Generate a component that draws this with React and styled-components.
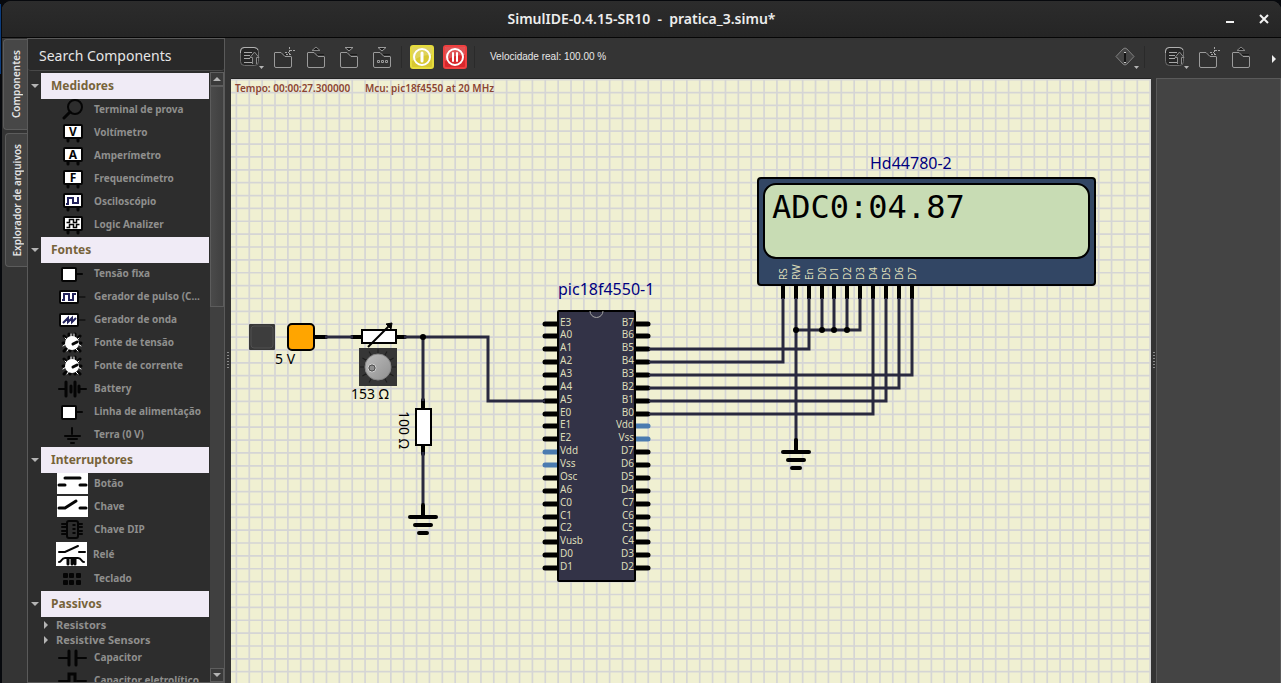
import React from "react";
import styled, { createGlobalStyle } from "styled-components";

const GlobalStyle = createGlobalStyle`
  * { box-sizing: border-box; }
  html, body, #root { height: 100%; }
  body {
    margin: 0;
    overflow: hidden;
    background: #07090d;
    font-family: "Noto Sans", "Open Sans", sans-serif;
  }
  button {
    margin: 0;
    padding: 0;
    border: 0;
    background: none;
    color: inherit;
    font: inherit;
    cursor: pointer;
  }
  ul { list-style: none; margin: 0; padding: 0; }
`;

/* ---------- window frame ---------- */

const Desktop = styled.div`
  height: 100vh;
  padding: 1px 0 0 2px;
  background: linear-gradient(#0c3c7c, #0c3c7c) 0 4px / 1px 70px no-repeat, #07090d;
`;

const Window = styled.div`
  height: 100%;
  display: flex;
  flex-direction: column;
  border-radius: 9px 9px 0 0;
  overflow: hidden;
  background: #343434;
`;

const TitleBar = styled.header`
  flex: 0 0 37px;
  display: grid;
  grid-template-columns: 80px 1fr 80px;
  align-items: center;
  border-bottom: 1px solid #060606;
  background: linear-gradient(#2c2c2c, #252525);
`;

const Title = styled.h1`
  grid-column: 2;
  margin: 0;
  text-align: center;
  white-space: pre;
  font-size: 14px;
  line-height: 20px;
  font-weight: 600;
  color: #ededed;
`;

const WindowButtons = styled.div`
  display: flex;
  justify-content: flex-end;
  padding-right: 8px;
`;

const WindowButton = styled.button`
  width: 18px;
  height: 18px;
  margin-left: 16px;
  color: #f2f2f2;
  svg { display: block; }
`;

const Body = styled.div`
  flex: 1;
  min-height: 0;
  display: flex;
`;

/* ---------- left dock ---------- */

const TabBar = styled.nav`
  flex: 0 0 25px;
  display: flex;
  flex-direction: column;
  align-items: flex-end;
  gap: 3px;
  padding-top: 1px;
`;

const Tab = styled.button`
  width: ${(p) => (p.$active ? 24 : 22)}px;
  height: ${(p) => (p.$active ? 91 : 134)}px;
  border: 1px solid #5c5c5c;
  border-right: 0;
  border-radius: 4px 0 0 4px;
  background: ${(p) => (p.$active ? "#474747" : "#424242")};
  color: #e4e4e4;
  display: flex;
  align-items: center;
  justify-content: center;
`;

const TabText = styled.span`
  writing-mode: vertical-rl;
  transform: rotate(180deg);
  font-size: 10px;
  line-height: 16px;
  font-weight: 600;
  white-space: nowrap;
`;

const Dock = styled.aside`
  flex: 0 0 198px;
  min-width: 0;
  display: flex;
  flex-direction: column;
  border: 1px solid #5a5a5a;
  background: #2d2d2d;
`;

const Search = styled.input`
  flex: 0 0 32px;
  width: 100%;
  padding: 2px 11px 0;
  border: 0;
  border-bottom: 1px solid #484848;
  border-radius: 3px;
  background: #292929;
  color: #e6e6e6;
  font: 14px/20px "Noto Sans", "Open Sans", sans-serif;
  outline: 0;
  &::placeholder { color: #e6e6e6; opacity: 1; }
`;

const TreeArea = styled.div`
  flex: 1;
  min-height: 0;
  display: flex;
  padding-top: 1px;
`;

const Tree = styled.div`
  flex: 1;
  min-width: 0;
  padding-top: 1px;
  overflow: hidden;
`;

const GroupHeader = styled.button`
  width: 100%;
  height: 26px;
  display: flex;
  align-items: center;
  text-align: left;
`;

const Arrow = styled.span`
  flex: 0 0 13px;
  display: flex;
  justify-content: center;
`;

const GroupTitle = styled.span`
  flex: 1;
  height: 26px;
  padding-left: 10px;
  background: #f0ebf6;
  color: #77633a;
  font-size: 12px;
  line-height: 26px;
  font-weight: 700;
`;

const Item = styled.button`
  width: 100%;
  height: ${(p) => (p.$tall ? 26 : 23)}px;
  padding-left: ${(p) => (p.$tall ? 28 : 29)}px;
  padding-bottom: 2px;
  display: flex;
  align-items: center;
  gap: 6px;
  text-align: left;
  svg { flex: none; display: block; }
`;

const ItemText = styled.span`
  font-size: ${(p) => (p.$branch ? 11 : 10)}px;
  line-height: 15px;
  font-weight: 700;
  color: #8f8f8d;
  white-space: nowrap;
`;

const Branch = styled.button`
  width: 100%;
  height: 15px;
  padding-left: 14px;
  display: flex;
  align-items: center;
  gap: 6px;
  text-align: left;
`;

const ScrollBar = styled.div`
  flex: 0 0 14px;
  margin-left: 1px;
  display: flex;
  flex-direction: column;
  background: #404040;
`;

const ScrollButton = styled.button`
  flex: 0 0 14px;
  display: flex;
  align-items: center;
  justify-content: center;
  border: 1px solid #5e5e5e;
  background: #3a3a3a;
`;

const ScrollTrack = styled.div`
  flex: 1;
`;

const ScrollThumb = styled.div`
  height: 38%;
  border: 1px solid #5c5c5c;
  background: linear-gradient(90deg, #4a4a4a, #404040);
`;

const Splitter = styled.div`
  flex: 0 0 ${(p) => p.$width}px;
  display: flex;
  align-items: center;
  justify-content: center;
`;

const Grip = styled.span`
  width: 2px;
  height: 17px;
  background: repeating-linear-gradient(#8a8a8a 0 1px, #343434 1px 3px);
`;

/* ---------- centre and right ---------- */

const Main = styled.main`
  flex: 1;
  min-width: 0;
  display: flex;
  flex-direction: column;
`;

const ToolBar = styled.div`
  flex: 0 0 40px;
  display: flex;
  align-items: center;
  padding: 0 3px 2px 2px;
`;

const ToolButton = styled.button`
  width: 33px;
  height: 33px;
  flex: none;
  display: flex;
  align-items: center;
  justify-content: center;
  svg { display: block; }
`;

const Divider = styled.span`
  flex: 0 0 7px;
  height: 22px;
  background: linear-gradient(#2a2a2a, #2a2a2a) center / 1px 100% no-repeat;
`;

const Speed = styled.span`
  padding-left: 12px;
  font: 10px/16px "Liberation Sans", Arial, sans-serif;
  color: #e8e8e8;
`;

const Spacer = styled.span`
  flex: 1;
`;

const Sheet = styled.svg`
  flex: 1;
  min-height: 0;
  width: 100%;
  display: block;
  background: #f0f0d2;
  font-family: "Noto Sans", "Open Sans", sans-serif;
`;

const Right = styled.aside`
  flex: 0 0 125px;
  display: flex;
  flex-direction: column;
`;

const RightPane = styled.div`
  flex: 1;
  border: 1px solid #5a5a5a;
  border-bottom: 0;
  background: #444444;
`;

/* ---------- schematic text ---------- */

const PinText = styled.text`
  font-size: 10px;
  fill: #dcdcb9;
`;
const NameText = styled.text`
  font-size: 16px;
  fill: #000080;
`;
const ValueText = styled.text`
  font-size: 14px;
  fill: #000;
`;
const StatusText = styled.text`
  font-size: 10px;
  font-weight: 600;
  fill: #8b4433;
`;
const LcdText = styled.text`
  font: 32px "DejaVu Sans Mono", monospace;
  fill: #000;
`;

/* ---------- small drawings ---------- */

const Triangle = ({ dir = "down", color = "#b4b4b4" }) => {
  const d = { down: "M0 2H8L4 6Z", up: "M0 6H8L4 2Z", right: "M2 0L6 4L2 8Z" }[dir];
  return (
    <svg width="8" height="8" viewBox="0 0 8 8">
      <path d={d} fill={color} />
    </svg>
  );
};

const Icon = ({ children, h = 21 }) => (
  <svg width="31" height={h} viewBox={`0 0 31 ${h}`} fill="none" stroke="#050505" strokeLinecap="round">
    {children}
  </svg>
);

const Meter = ({ children }) => (
  <Icon>
    <path d="M11 17V19M21 17V19" strokeWidth="3" />
    <rect x="7" y="3" width="18" height="13" rx="1" fill="#fff" strokeWidth="2" />
    {children}
  </Icon>
);
const Letter = styled.text`
  font: 700 12px "Noto Sans", sans-serif;
  fill: #050505;
  stroke: none;
  text-anchor: middle;
`;

const Dial = () => (
  <Icon>
    <g strokeWidth="3">
      <path d="M12 2V4M18 2V4M7 4L9 6M23 4L21 6M6 11H8M24 11H22M7 19L9 17M23 19L21 17M13 19V18M18 19V18" />
    </g>
    <path d="M8 6L10 8M22 6L20 8M6 14L9 12M10 19L12 16M21 19L18 16M14 2V6M17 2V6M24 14L21 12" stroke="#fff" strokeWidth="1" />
    <circle cx="15" cy="11" r="7" fill="#fff" stroke="none" />
    <path d="M16 12L20 10" strokeWidth="3" />
  </Icon>
);

const Supply = () => (
  <Icon>
    <path d="M20 11H25" strokeWidth="2" />
    <rect x="5" y="5" width="14" height="13" rx="1" fill="#fff" strokeWidth="2" />
  </Icon>
);

const Generator = ({ d }) => (
  <Icon>
    <path d="M22 11H28" strokeWidth="1" />
    <rect x="3" y="5" width="18" height="12" rx="1" fill="#fff" strokeWidth="2" />
    <path d={d} stroke="#23235c" strokeWidth="2" strokeLinecap="butt" />
  </Icon>
);

const icons = {
  probe: (
    <Icon>
      <circle cx="18" cy="8" r="7" strokeWidth="2" />
      <path d="M13 13L7 19" strokeWidth="3" />
    </Icon>
  ),
  volt: <Meter><Letter x="16" y="14">V</Letter></Meter>,
  amp: <Meter><Letter x="16" y="14">A</Letter></Meter>,
  freq: <Meter><Letter x="16" y="14">F</Letter></Meter>,
  scope: <Meter><path d="M9 13H11V7H16V12H21V6" stroke="#23235c" strokeWidth="2" strokeLinecap="butt" /></Meter>,
  logic: (
    <Meter>
      <path d="M9.500 8.500H12.500V5.500H16.500V8.500H19.500V5.500H22.500M9.500 13.500H12.500V10.500H16.500V13.500H19.500V10.500H22.500" strokeWidth="1.500" strokeLinecap="butt" />
    </Meter>
  ),
  fixed: <Supply />,
  pulse: <Generator d="M5 14H7V8H12V14H16V8H19" />,
  wave: <Generator d="M6 14L11 9V13L15 9V13L19 9" />,
  dial: <Dial />,
  battery: (
    <Icon>
      <path d="M2 11H8M23 11H29" strokeWidth="2" />
      <path d="M9 4V18M18 4V18" strokeWidth="3" />
      <path d="M14 8V14M22 8V14" strokeWidth="3" />
    </Icon>
  ),
  ground: (
    <Icon>
      <path d="M15 4V10M8 12H23M11 15H20M14 19H17" strokeWidth="2" />
    </Icon>
  ),
  push: (
    <Icon>
      <rect width="31" height="21" fill="#fff" stroke="none" />
      <path d="M8 5H23M2 12H8M23 12H29" strokeWidth="3" />
    </Icon>
  ),
  toggle: (
    <Icon>
      <rect width="31" height="21" fill="#fff" stroke="none" />
      <path d="M2 12H8L19 5M23 12H29" strokeWidth="3" />
    </Icon>
  ),
  dip: (
    <Icon>
      <rect x="10" y="2" width="11" height="17" rx="2" strokeWidth="2" />
      <path d="M5 5H9M5 8H9M5 12H9M5 15H9M22 5H25M22 8H25M22 12H25M22 15H25" strokeWidth="2" />
      <path d="M17 5V16" strokeWidth="3" strokeDasharray="2 2" strokeLinecap="butt" />
    </Icon>
  ),
  relay: (
    <Icon h={24}>
      <rect width="31" height="24" fill="#fff" stroke="none" />
      <path d="M3 10H9L22 4M23 10H29" strokeWidth="2" />
      <path d="M3 20C6 20 5 16 9 16H22C26 16 25 20 28 20" strokeWidth="2" />
      <path d="M12 17V22M16 17V22M19 17V22" strokeWidth="3" />
    </Icon>
  ),
  keypad: (
    <Icon>
      <g fill="#050505" stroke="none">
        {[6, 12, 19].map((x) => [5, 12].map((y) => (
          <rect key={`${x}-${y}`} x={x} y={y} width="5" height="5" rx="1" />
        )))}
      </g>
    </Icon>
  ),
  capacitor: (
    <Icon>
      <path d="M2 11H11M20 11H29" strokeWidth="2" />
      <path d="M12 4V18M19 4V18" strokeWidth="3" />
    </Icon>
  ),
  electrolytic: (
    <Icon>
      <path d="M2 11H11M20 11H29" strokeWidth="2" />
      <path d="M12 11V4H18V18" strokeWidth="3" />
    </Icon>
  ),
};

const groups = [
  {
    title: "Medidores",
    items: [
      ["probe", "Terminal de prova"],
      ["volt", "Voltímetro"],
      ["amp", "Amperímetro"],
      ["freq", "Frequencímetro"],
      ["scope", "Osciloscópio"],
      ["logic", "Logic Analizer"],
    ],
  },
  {
    title: "Fontes",
    items: [
      ["fixed", "Tensão fixa"],
      ["pulse", "Gerador de pulso (C..."],
      ["wave", "Gerador de onda"],
      ["dial", "Fonte de tensão"],
      ["dial", "Fonte de corrente"],
      ["battery", "Battery"],
      ["fixed", "Linha de alimentação"],
      ["ground", "Terra (0 V)"],
    ],
  },
  {
    title: "Interruptores",
    items: [
      ["push", "Botão"],
      ["toggle", "Chave"],
      ["dip", "Chave DIP"],
      ["relay", "Relé"],
      ["keypad", "Teclado"],
    ],
  },
  {
    title: "Passivos",
    branches: ["Resistors", "Resistive Sensors"],
    items: [
      ["capacitor", "Capacitor"],
      ["electrolytic", "Capacitor eletrolítico"],
    ],
  },
];

/* ---------- toolbar drawings ---------- */

const ToolIcon = ({ children, menu }) => (
  <svg width="28" height="28" viewBox="0 0 28 28" fill="none" stroke="#9b9b9b" strokeLinejoin="round">
    {children}
    {menu && <path d="M23 23H28L25.500 26Z" fill="#b5b5b5" stroke="none" />}
  </svg>
);

const RecentIcon = () => (
  <ToolIcon menu>
    <rect x="4.500" y="4.500" width="18" height="18" rx="4" fill="#262626" stroke="#6d6d6d" />
    <path d="M4.500 10V8Q4.500 4.500 8 4.500H18Q21 4.500 22 7" stroke="#b0b0b0" />
    <path d="M8 9.500H16M8 12.500H14M8 15.500H14M8 19.500H17" stroke="#a8a8a8" />
    <path d="M16.500 21V14.500H14L18.500 9L23 14.500H20.500V21" fill="#333" stroke="#8d8d8d" />
  </ToolIcon>
);
const FolderIcon = ({ kind }) => (
  <ToolIcon>
    <path d="M5.500 10V23Q5.500 24.500 7 24.500H21Q22.500 24.500 22.500 23V14Q22.500 13.500 22 13.500H16L12 9.500H6Q5.500 9.500 5.500 10Z" fill="#303030" />
    <path d="M15 11.500H22" stroke="#1a1a1a" />
    {kind === "new" && <path d="M20.500 4V12M16 9.500H20M21 7.500H26M17 11.500H23" stroke="#a5a5a5" strokeDasharray="2 1" />}
    {kind === "open" && <path d="M10 7.500L14 4L18 7.500Z" fill="#1b1b1b" stroke="#858585" />}
    {(kind === "save" || kind === "saveAs") && <path d="M10 4.500H18L14 8Z" fill="#1b1b1b" stroke="#9a9a9a" />}
    {kind === "saveAs" && <path d="M9.500 17.500H11.500V19.500H9.500ZM13.500 17.500H15.500V19.500H13.500ZM17.500 17.500H19.500V19.500H17.500Z" />}
  </ToolIcon>
);
const InfoIcon = () => (
  <ToolIcon menu>
    <path d="M5 13.500L12 6Q14 4 16 6L23 13.500L16 21Q14 23 12 21Z" fill="#444" stroke="#828282" />
    <path d="M14 9V19" stroke="#151515" strokeWidth="2" />
    <path d="M13 9.500H15M13 19.500H15" stroke="#ccc" />
  </ToolIcon>
);
const PowerIcon = ({ fill, edge, pause }) => (
  <svg width="24" height="24" viewBox="0 0 24 24" fill="none">
    <rect x="1" y="1" width="22" height="22" rx="2" fill={fill} stroke={edge} strokeWidth="2" />
    <path d="M2 2H22V10Q12 9 2 16Z" fill="#fff" opacity="0.2" />
    <circle cx="12" cy="12" r="8" stroke="#fff" strokeWidth="2" />
    <path d={pause ? "M10 8V16M14 8V16" : "M12 8V16"} stroke="#fff" strokeWidth={pause ? 2 : 3} strokeLinecap="round" />
  </svg>
);

/* ---------- schematic ---------- */

const PITCH = 12.87;
const row = (n) => Math.round(323.5 + n * PITCH);
const lcdPin = (n) => Math.round(783 + n * PITCH);

const leftPins = ["E3", "A0", "A1", "A2", "A3", "A4", "A5", "E0", "E1", "E2", "Vdd", "Vss", "Osc", "A6", "C0", "C1", "C2", "Vusb", "D0", "D1"];
const rightPins = ["B7", "B6", "B5", "B4", "B3", "B2", "B1", "B0", "Vdd", "Vss", "D7", "D6", "D5", "D4", "C7", "C6", "C5", "C4", "D3", "D2"];
const lcdPins = ["RS", "RW", "En", "D0", "D1", "D2", "D3", "D4", "D5", "D6", "D7"];

const pinColor = (name) => (name === "Vdd" || name === "Vss" ? "#4a7bb0" : "#000");

const Grid = () => (
  <g stroke="#d5d5d5" strokeWidth="1.700">
    {Array.from({ length: 240 }, (_, i) => (
      <line key={`v${i}`} x1={236.4 + i * PITCH} x2={236.4 + i * PITCH} y1="0" y2="3000" />
    ))}
    {Array.from({ length: 160 }, (_, i) => (
      <line key={`h${i}`} x1="0" x2="4000" y1={79.7 + i * PITCH} y2={79.7 + i * PITCH} />
    ))}
  </g>
);

const Ground = ({ x, y }) => (
  <g stroke="#000" strokeWidth="4" strokeLinecap="round">
    <path d={`M${x} ${y - 12}V${y}M${x - 13} ${y}H${x + 13}M${x - 8} ${y + 8}H${x + 8}M${x - 4} ${y + 16}H${x + 4}`} />
  </g>
);

const wires = [
  "M325 337H353M404 337H488V401H545",
  "M423 337V401M423 452V504",
  `M649 ${row(2)}H${lcdPin(2)}V298`,
  `M649 ${row(3)}H${lcdPin(0)}V298`,
  `M649 ${row(4)}H${lcdPin(10)}V298`,
  `M649 ${row(5)}H${lcdPin(9)}V298`,
  `M649 ${row(6)}H${lcdPin(8)}V298`,
  `M649 ${row(7)}H${lcdPin(7)}V298`,
  `M${lcdPin(1)} 298V440M${lcdPin(1)} 330H${lcdPin(6)}V298`,
  `M${lcdPin(3)} 298V330M${lcdPin(4)} 298V330M${lcdPin(5)} 298V330`,
];

const Schematic = () => (
  <Sheet role="img" aria-label="pratica_3.simu">
    <defs>
      <linearGradient id="knob" x1="0" y1="0" x2="1" y2="1">
        <stop offset="0" stopColor="#bdbdbd" />
        <stop offset="1" stopColor="#909090" />
      </linearGradient>
    </defs>
    <g transform="translate(-231 -78)">
      <Grid />
      <path d="M231 78H4000" stroke="#222" strokeWidth="2" />
      <StatusText x="235" y="92">Tempo: 00:00:27.300000</StatusText>
      <StatusText x="365" y="92">Mcu: pic18f4550 at 20 MHz</StatusText>

      {/* microcontroller pins sit under the body */}
      <g strokeWidth="5" strokeLinecap="round">
        {leftPins.map((name, i) => (
          <path key={i} d={`M545 ${row(i)}H557`} stroke={pinColor(name)} />
        ))}
        {rightPins.map((name, i) => (
          <path key={i} d={`M636 ${row(i)}H648`} stroke={pinColor(name)} />
        ))}
      </g>
      <g stroke="#000" strokeWidth="4">
        {lcdPins.map((name, i) => (
          <path key={i} d={`M${lcdPin(i)} 285V299`} />
        ))}
        <path d="M315 337H326M352 337H361M397 337H405M423 400V409M423 445V454" strokeLinecap="round" />
      </g>
      <g fill="none" stroke="#29293f" strokeWidth="3">
        {wires.map((d) => (
          <path key={d} d={d} />
        ))}
      </g>
      <circle cx="423" cy="337" r="3" />
      {[1, 3, 4, 5].map((n) => (
        <circle key={n} cx={lcdPin(n)} cy="330" r="3" />
      ))}
      <Ground x={423} y={517} />
      <Ground x={796} y={452} />

      {/* voltage source */}
      <rect x="249" y="324" width="26" height="26" rx="1" fill="#383838" />
      <rect x="251" y="326" width="22" height="22" rx="3" fill="#3d3d3d" stroke="#505050" />
      <rect x="288" y="324" width="26" height="26" rx="4" fill="#ffa500" stroke="#000" strokeWidth="2" />
      <ValueText x="275" y="364">5 V</ValueText>

      {/* potentiometer */}
      <rect x="362" y="330" width="34" height="13" fill="#fff" stroke="#000" strokeWidth="2" />
      <path d="M368 347L390 325" stroke="#000" strokeWidth="2" />
      <path d="M386 324L392 323L391 329Z" stroke="#000" />
      <rect x="359" y="348" width="38" height="38" fill="#363636" />
      <g stroke="#1c1c1c">
        {[30, 60, 90, 120, 150, 180, 210, 240, 270, 300, 330].map((a) => (
          <path key={a} d="M378 385V380" transform={`rotate(${a} 378 367)`} />
        ))}
      </g>
      <circle cx="378" cy="367" r="13" fill="url(#knob)" stroke="#858585" />
      <circle cx="372" cy="368" r="4" fill="#858585" stroke="#d0d0d0" />
      <circle cx="372" cy="368" r="3" fill="#8f8f8f" stroke="#505050" />
      <ValueText x="351" y="399">153 Ω</ValueText>

      {/* resistor */}
      <rect x="416" y="409" width="15" height="36" fill="#fff" stroke="#000" strokeWidth="2" />
      <ValueText transform="translate(399 411) rotate(90)">100 Ω</ValueText>

      {/* microcontroller */}
      <rect x="558" y="311" width="77" height="270" rx="1" fill="#333347" stroke="#000" strokeWidth="2" />
      <path d="M590 311A6 6 0 0 0 603 311" fill="none" stroke="#a5a5a5" />
      <NameText x="558" y="295">pic18f4550-1</NameText>
      {leftPins.map((name, i) => (
        <PinText key={i} x="560" y={row(i) + 2}>{name}</PinText>
      ))}
      {rightPins.map((name, i) => (
        <PinText key={i} x="634" y={row(i) + 2} textAnchor="end">{name}</PinText>
      ))}

      {/* display */}
      <rect x="758" y="178" width="337" height="107" rx="3" fill="#324664" stroke="#000" strokeWidth="2" />
      <rect x="764" y="184" width="325" height="74" rx="12" fill="#c8dcb4" stroke="#000" strokeWidth="2" />
      <NameText x="870" y="169">Hd44780-2</NameText>
      <LcdText x="772" y="218">ADC0:04.87</LcdText>
      {lcdPins.map((name, i) => (
        <PinText key={i} transform={`translate(${lcdPin(i) + 4} 280) rotate(-90)`}>{name}</PinText>
      ))}
    </g>
  </Sheet>
);

/* ---------- page ---------- */

export default function App() {
  return (
    <>
      <GlobalStyle />
      <Desktop>
        <Window>
          <TitleBar>
            <Title>SimulIDE-0.4.15-SR10  -  pratica_3.simu*</Title>
            <WindowButtons>
              <WindowButton aria-label="Minimize">
                <svg width="18" height="18"><path d="M5 12H13" stroke="currentColor" strokeWidth="2" /></svg>
              </WindowButton>
              <WindowButton aria-label="Close">
                <svg width="18" height="18"><path d="M5 5L13 13M13 5L5 13" stroke="currentColor" strokeWidth="2" /></svg>
              </WindowButton>
            </WindowButtons>
          </TitleBar>
          <Body>
            <TabBar>
              <Tab $active><TabText>Componentes</TabText></Tab>
              <Tab><TabText>Explorador de arquivos</TabText></Tab>
            </TabBar>
            <Dock>
              <Search placeholder="Search Components" aria-label="Search Components" />
              <TreeArea>
                <Tree>
                  {groups.map((group) => (
                    <section key={group.title}>
                      <GroupHeader>
                        <Arrow><Triangle /></Arrow>
                        <GroupTitle>{group.title}</GroupTitle>
                      </GroupHeader>
                      {group.branches?.map((name) => (
                        <Branch key={name}>
                          <Triangle dir="right" />
                          <ItemText $branch>{name}</ItemText>
                        </Branch>
                      ))}
                      <ul>
                        {group.items.map(([icon, name]) => (
                          <li key={name}>
                            <Item $tall={icon === "relay"}>
                              {icons[icon]}
                              <ItemText>{name}</ItemText>
                            </Item>
                          </li>
                        ))}
                      </ul>
                    </section>
                  ))}
                </Tree>
                <ScrollBar>
                  <ScrollButton aria-label="Scroll up"><Triangle dir="up" /></ScrollButton>
                  <ScrollTrack><ScrollThumb /></ScrollTrack>
                  <ScrollButton aria-label="Scroll down"><Triangle /></ScrollButton>
                </ScrollBar>
              </TreeArea>
            </Dock>
            <Splitter $width={6}><Grip /></Splitter>
            <Main>
              <ToolBar>
                <ToolButton aria-label="Recent circuits"><RecentIcon /></ToolButton>
                <ToolButton aria-label="New circuit"><FolderIcon kind="new" /></ToolButton>
                <ToolButton aria-label="Open circuit"><FolderIcon kind="open" /></ToolButton>
                <ToolButton aria-label="Save circuit"><FolderIcon kind="save" /></ToolButton>
                <ToolButton aria-label="Save circuit as"><FolderIcon kind="saveAs" /></ToolButton>
                <Divider />
                <ToolButton aria-label="Power"><PowerIcon fill="#d8c832" edge="#e6dc3c" /></ToolButton>
                <ToolButton aria-label="Pause"><PowerIcon fill="#d8282c" edge="#f04040" pause /></ToolButton>
                <Divider />
                <Speed>Velocidade real: 100.00 %</Speed>
                <Spacer />
                <ToolButton aria-label="Info"><InfoIcon /></ToolButton>
                <Divider />
              </ToolBar>
              <Schematic />
            </Main>
            <Splitter $width={5}><Grip /></Splitter>
            <Right>
              <ToolBar>
                <ToolButton aria-label="Recent files"><RecentIcon /></ToolButton>
                <ToolButton aria-label="New file"><FolderIcon kind="new" /></ToolButton>
                <ToolButton aria-label="Open file"><FolderIcon kind="open" /></ToolButton>
                <Spacer />
                <button aria-label="More tools"><Triangle dir="right" color="#eee" /></button>
              </ToolBar>
              <RightPane />
            </Right>
          </Body>
        </Window>
      </Desktop>
    </>
  );
}
